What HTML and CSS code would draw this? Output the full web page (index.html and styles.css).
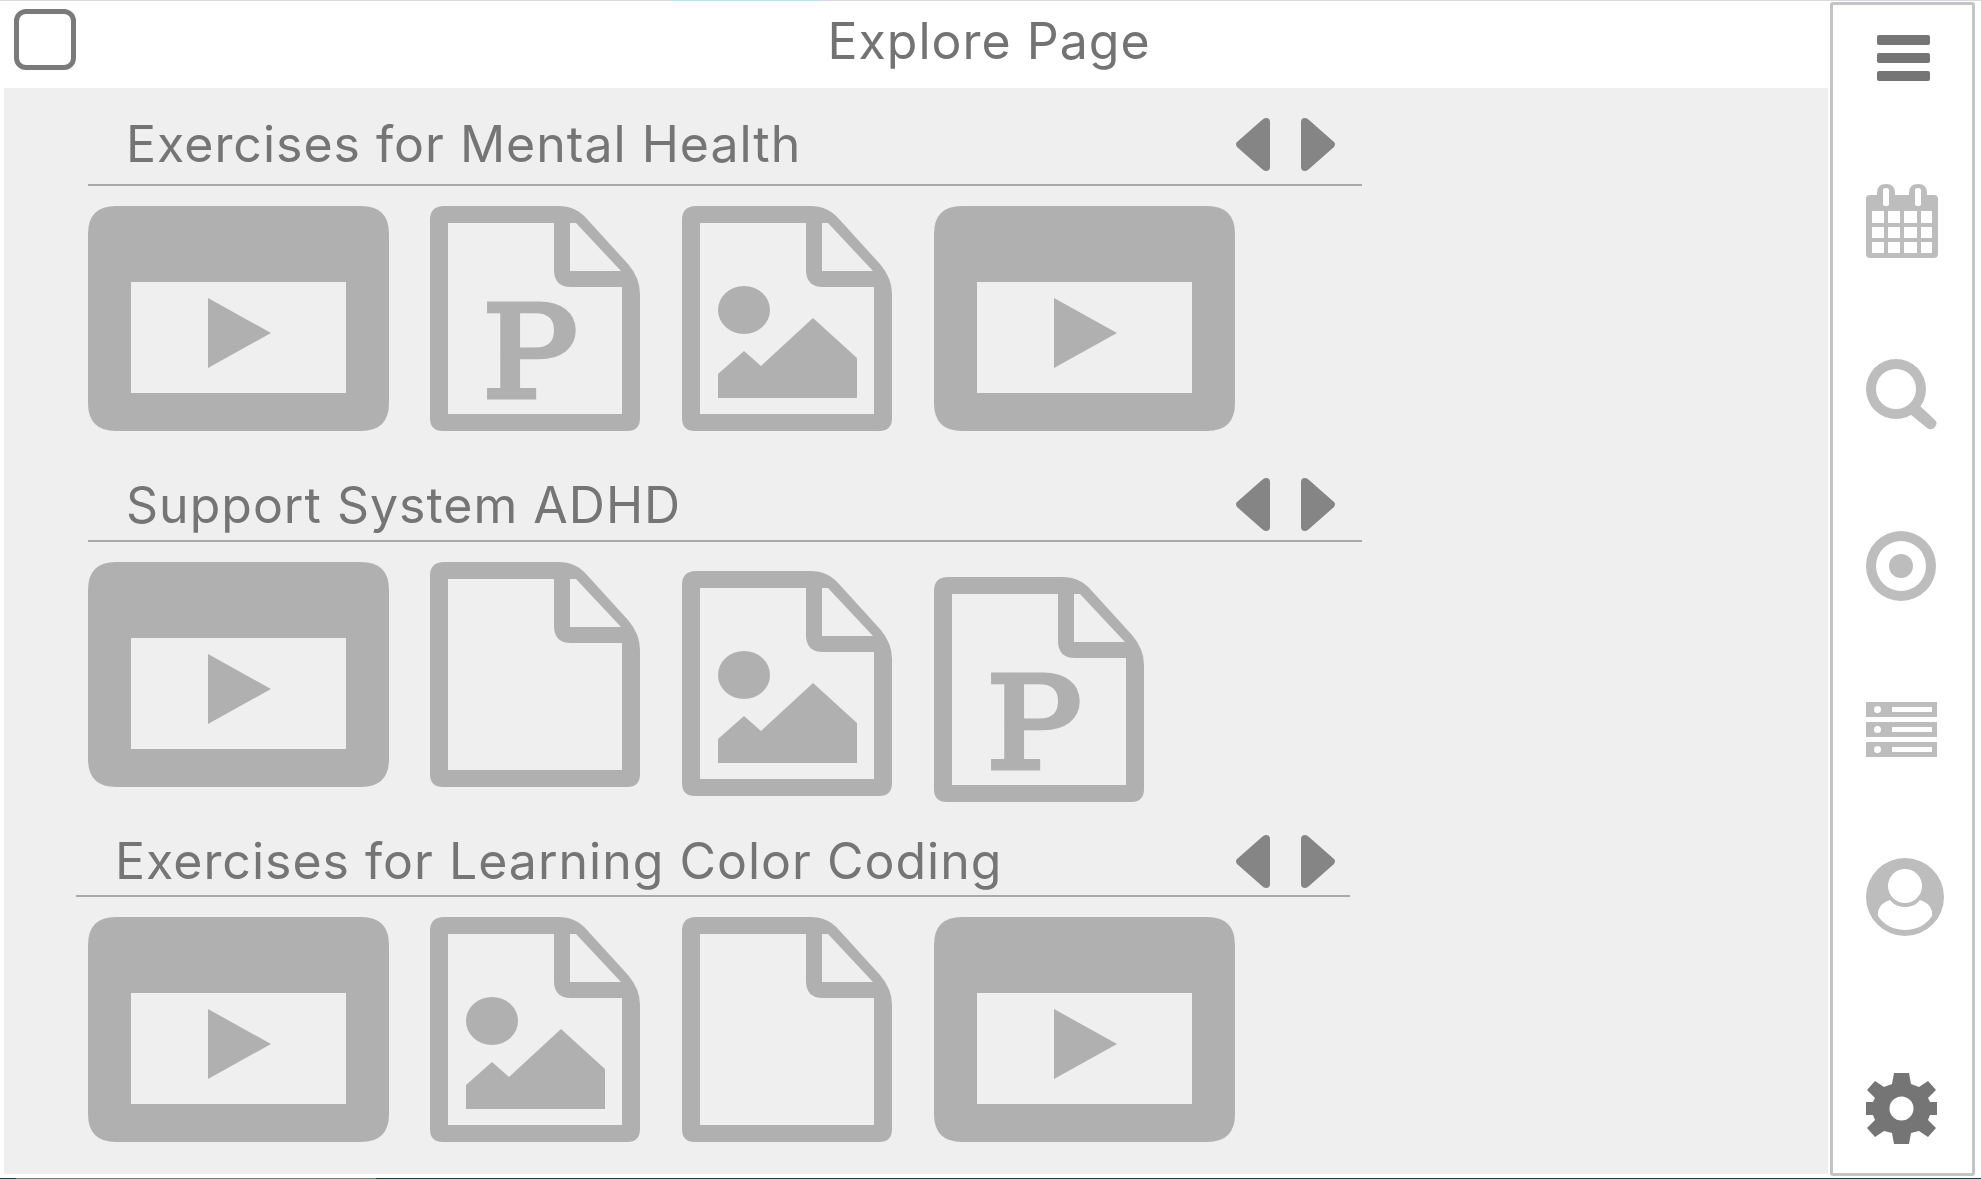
FILE: index.html
```html
<!DOCTYPE html>
<html lang="en">
<head>
    <meta charset="UTF-8">
    <meta name="viewport" content="width=device-width, initial-scale=1.0">
    <title>Explore Page</title>
    <link rel="stylesheet" href="styles.css">
</head>
<body>

<svg class="sprites" width="0" height="0" aria-hidden="true">
    <symbol id="i-video" viewBox="0 0 301 225">
        <path fill-rule="evenodd" d="M28 0H273Q301 0 301 28V197Q301 225 273 225H28Q0 225 0 197V28Q0 0 28 0ZM43 76V187H258V76ZM120 92V162L183 127Z"/>
    </symbol>
    <symbol id="i-doc" viewBox="0 0 210 225">
        <path fill-rule="evenodd" d="M14 0H128Q146 0 157 13L198 58Q210 72 210 88V212Q210 225 197 225H13Q0 225 0 212V14Q0 0 14 0ZM18 17V208H192V81H141Q124 81 124 64V17ZM140 17V65H191L146 17Z"/>
    </symbol>
    <symbol id="i-doc-image" viewBox="0 0 210 225">
        <use href="#i-doc"/>
        <ellipse cx="62" cy="104" rx="26" ry="24"/>
        <path d="M36 168L62 145L79 160L131 112L175 152V192H36Z"/>
    </symbol>
    <symbol id="i-left" viewBox="0 0 34 53">
        <path d="M34 4V49Q34 53 30 53Q28 53 26 51L1 29Q-1 26 1 24L26 2Q28 0 30 0Q34 0 34 4Z"/>
    </symbol>
    <symbol id="i-right" viewBox="0 0 34 53">
        <path d="M0 4V49Q0 53 4 53Q6 53 8 51L33 29Q35 26 33 24L8 2Q6 0 4 0Q0 0 0 4Z"/>
    </symbol>
</svg>

<div class="top-strip"><span class="top-strip-tab"></span></div>

<div class="screen">
    <div class="content">
        <header class="page-header">
            <span class="page-check"></span>
            <h1>Explore Page</h1>
        </header>

        <main class="explore">
            <section class="topic">
                <div class="topic-head">
                    <h2>Exercises for Mental Health</h2>
                    <div class="topic-arrows">
                        <svg class="arrow"><use href="#i-left"/></svg>
                        <svg class="arrow"><use href="#i-right"/></svg>
                    </div>
                </div>
                <div class="topic-items">
                    <svg class="tile tile-video"><use href="#i-video"/></svg>
                    <svg class="tile tile-doc" viewBox="0 0 210 225">
                        <use href="#i-doc"/>
                        <text class="doc-letter" x="52" y="191" textLength="96" lengthAdjust="spacingAndGlyphs">P</text>
                    </svg>
                    <svg class="tile tile-doc"><use href="#i-doc-image"/></svg>
                    <svg class="tile tile-video"><use href="#i-video"/></svg>
                </div>
            </section>

            <section class="topic topic-adhd">
                <div class="topic-head">
                    <h2>Support System ADHD</h2>
                    <div class="topic-arrows">
                        <svg class="arrow"><use href="#i-left"/></svg>
                        <svg class="arrow"><use href="#i-right"/></svg>
                    </div>
                </div>
                <div class="topic-items">
                    <svg class="tile tile-video"><use href="#i-video"/></svg>
                    <svg class="tile tile-doc"><use href="#i-doc"/></svg>
                    <svg class="tile tile-doc drop-9"><use href="#i-doc-image"/></svg>
                    <svg class="tile tile-doc drop-15" viewBox="0 0 210 225">
                        <use href="#i-doc"/>
                        <text class="doc-letter" x="52" y="191" textLength="96" lengthAdjust="spacingAndGlyphs">P</text>
                    </svg>
                </div>
            </section>

            <section class="topic topic-color">
                <div class="topic-head">
                    <h2>Exercises for Learning Color Coding</h2>
                    <div class="topic-arrows">
                        <svg class="arrow"><use href="#i-left"/></svg>
                        <svg class="arrow"><use href="#i-right"/></svg>
                    </div>
                </div>
                <div class="topic-items">
                    <svg class="tile tile-video"><use href="#i-video"/></svg>
                    <svg class="tile tile-doc"><use href="#i-doc-image"/></svg>
                    <svg class="tile tile-doc"><use href="#i-doc"/></svg>
                    <svg class="tile tile-video"><use href="#i-video"/></svg>
                </div>
            </section>
        </main>
    </div>

    <nav class="sidebar">
        <svg class="nav-icon dark" width="53" height="46" viewBox="0 0 53 46">
            <rect width="53" height="10" rx="2"/>
            <rect y="18" width="53" height="10" rx="2"/>
            <rect y="36" width="53" height="10" rx="2"/>
        </svg>
        <svg class="nav-icon" width="72" height="74" viewBox="0 0 72 74">
            <path fill-rule="evenodd" d="M4 11H11V9Q11 0 20 0Q29 0 29 9V11H43V9Q43 0 52 0Q61 0 61 9V11H68Q72 11 72 15V70Q72 74 68 74H4Q0 74 0 70V15Q0 11 4 11ZM17 6V20Q17 22 20 22Q23 22 23 20V6Q23 4 20 4Q17 4 17 6ZM49 6V20Q49 22 52 22Q55 22 55 20V6Q55 4 52 4Q49 4 49 6ZM6 27V39H18V27ZM22 27V39H34V27ZM38 27V39H51V27ZM55 27V39H66V27ZM6 43V54H18V43ZM22 43V54H34V43ZM38 43V54H51V43ZM55 43V54H66V43ZM6 58V69H18V58ZM22 58V69H34V58ZM38 58V69H51V58ZM55 58V69H66V58Z"/>
        </svg>
        <svg class="nav-icon" width="71" height="71" viewBox="0 0 71 71">
            <path fill-rule="evenodd" d="M30 0A30 30 0 1 1 30 60A30 30 0 1 1 30 0ZM30 10A20 20 0 1 0 30 50A20 20 0 1 0 30 10Z"/>
            <path d="M44 55L53 46L69 61Q72 64 69 68Q65 72 61 69Z"/>
        </svg>
        <svg class="nav-icon" width="70" height="70" viewBox="0 0 70 70">
            <path fill-rule="evenodd" d="M35 0A35 35 0 1 1 35 70A35 35 0 1 1 35 0ZM35 10A25 25 0 1 0 35 60A25 25 0 1 0 35 10Z"/>
            <circle cx="35" cy="35" r="12"/>
        </svg>
        <svg class="nav-icon" width="71" height="55" viewBox="0 0 71 55">
            <path fill-rule="evenodd" d="M0 0H71V15H0ZM8 7.500A3.500 3.500 0 1 0 15 7.500A3.500 3.500 0 1 0 8 7.500ZM26 5V10H66V5Z"/>
            <path fill-rule="evenodd" d="M0 20H71V35H0ZM8 27.500A3.500 3.500 0 1 0 15 27.500A3.500 3.500 0 1 0 8 27.500ZM26 25V30H66V25Z"/>
            <path fill-rule="evenodd" d="M0 40H71V55H0ZM8 47.500A3.500 3.500 0 1 0 15 47.500A3.500 3.500 0 1 0 8 47.500ZM26 45V50H66V45Z"/>
        </svg>
        <svg class="nav-icon" width="78" height="78" viewBox="0 0 78 78">
            <path fill-rule="evenodd" d="M39 0A39 39 0 1 1 39 78A39 39 0 1 1 39 0ZM39 11A17 17 0 1 0 39 45A17 17 0 1 0 39 11ZM24 42C15 45 11 51 12 58C18 67 28 72 39 72C50 72 60 67 66 58C67 51 63 45 54 42C50 47 45 49 39 49C33 49 28 47 24 42Z"/>
        </svg>
        <svg class="nav-icon dark nav-gear" width="71" height="71" viewBox="0 0 71 71">
            <path fill-rule="evenodd" d="M28 0H43L45 11L53 14L62 8L70 17L62 25L64 29H71V42H64L62 47L70 55L62 64L53 58L45 60L43 71H28L26 60L18 58L9 64L1 55L9 47L7 42H0V29H7L9 25L1 17L9 8L18 14L26 11ZM35.500 23.500A12 12 0 1 0 35.500 47.500A12 12 0 1 0 35.500 23.500Z"/>
        </svg>
    </nav>
</div>

<div class="bottom-strip"><span class="bottom-strip-part"></span></div>

</body>
</html>
```
FILE: styles.css
```css
body {
    margin: 0;
    height: 1179px;
    overflow: hidden;
    display: flex;
    flex-direction: column;
    background-color: #ffffff;
    font-family: "Inter", "Noto Sans", sans-serif;
}
.sprites {
    display: block;
    height: 0;
}
.top-strip {
    height: 1px;
    flex: none;
    background-color: #d5d9e6;
    padding-left: 672px;
}
.top-strip-tab {
    display: block;
    width: 148px;
    height: 1px;
    background-color: #b5e4fa;
}
.screen {
    flex: 1;
    min-height: 0;
    display: flex;
}
.content {
    flex: 1;
    min-width: 0;
    display: flex;
    flex-direction: column;
}
.page-header {
    height: 87px;
    flex: none;
    box-sizing: border-box;
    position: relative;
    display: flex;
    align-items: center;
    justify-content: center;
    padding-left: 148px;
    padding-bottom: 8px;
}
.page-header h1 {
    margin: 0;
    font-size: 50px;
    font-weight: 400;
    letter-spacing: 1px;
    color: #737373;
}
.page-check {
    position: absolute;
    left: 14px;
    top: 8px;
    width: 52px;
    height: 51px;
    border: 5px solid #7a7a7a;
    border-radius: 12px;
}
.explore {
    flex: 1;
    margin-left: 4px;
    margin-right: 2px;
    margin-bottom: 4px;
    background-color: #efefef;
}
.topic {
    width: 1274px;
    margin-left: 84px;
}
.topic-head {
    height: 98px;
    box-sizing: border-box;
    display: flex;
    align-items: center;
    justify-content: space-between;
    border-bottom: 2px solid #a9a9a9;
    padding-top: 16px;
    padding-left: 38px;
    padding-right: 27px;
}
.topic-head h2 {
    margin: 0;
    font-size: 50px;
    font-weight: 400;
    letter-spacing: 1px;
    color: #757575;
    white-space: nowrap;
}
.topic-arrows {
    display: flex;
    gap: 31px;
}
.arrow {
    display: block;
    width: 34px;
    height: 53px;
    fill: #858585;
}
.topic-items {
    display: flex;
    align-items: flex-start;
    gap: 42px;
    padding-top: 20px;
}
.tile {
    display: block;
    height: 225px;
    fill: #b0b0b0;
}
.tile-video {
    width: 301px;
    margin-right: -1px;
}
.tile-doc {
    width: 210px;
}
.doc-letter {
    font-family: "DejaVu Serif", serif;
    font-size: 127px;
    stroke: #b0b0b0;
    stroke-width: 5px;
}
.drop-9 {
    margin-top: 9px;
}
.drop-15 {
    margin-top: 15px;
}
.topic-adhd .topic-head {
    height: 111px;
    padding-top: 38px;
}
.topic-color {
    margin-left: 72px;
}
.topic-color .topic-head {
    height: 95px;
    padding-top: 25px;
    padding-left: 39px;
    padding-right: 15px;
}
.topic-color .topic-items {
    padding-left: 12px;
}
.sidebar {
    flex: none;
    width: 145px;
    box-sizing: border-box;
    margin: 1px 6px 2px 0;
    padding-top: 30px;
    padding-left: 33px;
    border: 3px solid #c4c4c4;
    border-radius: 3px;
    display: flex;
    flex-direction: column;
    align-items: flex-start;
    gap: 101px;
}
.nav-icon {
    display: block;
    flex: none;
    fill: #bdbdbd;
}
.nav-icon.dark {
    fill: #757575;
}
.sidebar .nav-icon:first-child {
    margin-left: 11px;
    margin-bottom: 2px;
}
.nav-gear {
    margin-top: 36px;
}
.bottom-strip {
    height: 1px;
    flex: none;
    background-color: #143f3f;
}
.bottom-strip-part {
    display: block;
    width: 360px;
    height: 1px;
    margin-left: 16px;
    background-color: #6f8078;
}
```
